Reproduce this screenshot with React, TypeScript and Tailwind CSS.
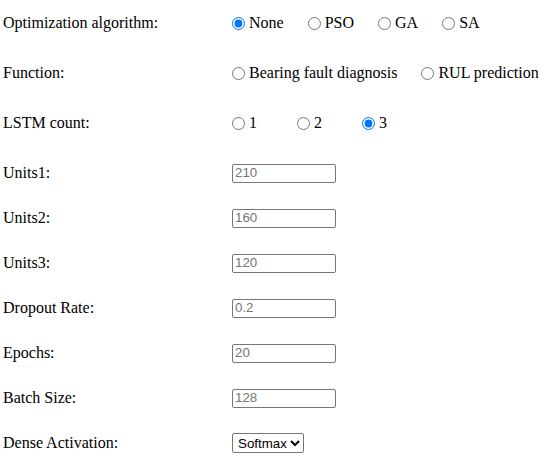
import React from "react";

const serif = "font-['Liberation_Serif','Times_New_Roman',serif]";

function Radio({ checked, label, className = "" }: { checked?: boolean; label: string; className?: string }) {
  return (
    <label className={`flex items-center ${className}`}>
      <input
        type="radio"
        defaultChecked={checked}
        className="m-0 mr-[4px] h-[13px] w-[13px] accent-[#0075ff]"
      />
      <span>{label}</span>
    </label>
  );
}

function Row({ label, children, first }: { label: string; children: React.ReactNode; first?: boolean }) {
  return (
    <div className="flex h-[24px] items-center">
      <div className="w-[229px] shrink-0">{label}</div>
      <div className="flex items-center">{children}</div>
    </div>
  );
}

function NumInput({ ph }: { ph: string }) {
  return (
    <input
      type="text"
      placeholder={ph}
      className="h-[19px] w-[104px] rounded-[2px] border border-[#767676] bg-white px-[2px] py-[1px] font-['Liberation_Sans',Arial,sans-serif] text-[13.33px] text-black placeholder:text-[#757575]"
    />
  );
}

export default function App() {
  return (
    <div className={`${serif} bg-white pl-[3px] pt-[11px] text-[16px] text-black`}>
      <div className="flex flex-col">
        <Row label="Optimization algorithm:" first>
          <Radio checked label="None" className="mr-[24px]" />
          <Radio label="PSO" className="mr-[24px]" />
          <Radio label="GA" className="mr-[24px]" />
          <Radio label="SA" />
        </Row>
        <div className="h-[26px]" />
        <Row label="Function:">
          <Radio label="Bearing fault diagnosis" className="mr-[24px]" />
          <Radio label="RUL prediction" />
        </Row>
        <div className="h-[26px]" />
        <Row label="LSTM count:">
          <Radio label="1" className="w-[65px]" />
          <Radio label="2" className="w-[65px]" />
          <Radio checked label="3" />
        </Row>
        <div className="h-[26px]" />
        <Row label="Units1:">
          <NumInput ph="210" />
        </Row>
        <div className="h-[21px]" />
        <Row label="Units2:">
          <NumInput ph="160" />
        </Row>
        <div className="h-[21px]" />
        <Row label="Units3:">
          <NumInput ph="120" />
        </Row>
        <div className="h-[21px]" />
        <Row label="Dropout Rate:">
          <NumInput ph="0.2" />
        </Row>
        <div className="h-[21px]" />
        <Row label="Epochs:">
          <NumInput ph="20" />
        </Row>
        <div className="h-[21px]" />
        <Row label="Batch Size:">
          <NumInput ph="128" />
        </Row>
        <div className="h-[21px]" />
        <Row label="Dense Activation:">
          <select
            defaultValue="softmax"
            className="h-[20px] rounded-[2px] border border-[#767676] bg-white pl-[1px] font-['Liberation_Sans',Arial,sans-serif] text-[13.33px] text-black"
          >
            <option value="softmax">Softmax</option>
            <option value="relu">ReLU</option>
            <option value="sigmoid">Sigmoid</option>
          </select>
        </Row>
      </div>
    </div>
  );
}
